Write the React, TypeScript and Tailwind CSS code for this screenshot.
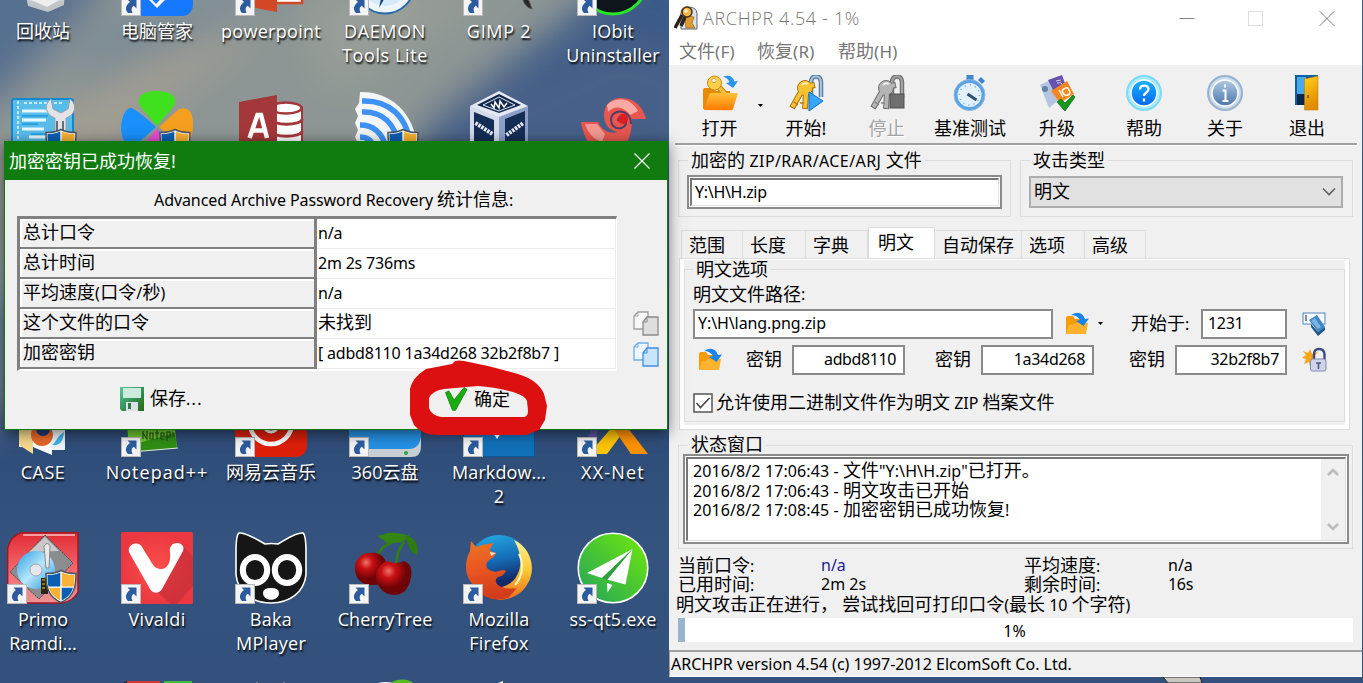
import React from "react";

/* ---------- text ---------- */

// Chinese runs are set a little larger than the Latin text around them.
function Mixed({ text }: { text: string }) {
  const parts = text.split(/([\u3000-\u9fff\uff00-\uffef]+)/).filter(Boolean);
  return (
    <>
      {parts.map((p, i) =>
        /[\u3000-\u9fff\uff00-\uffef]/.test(p) ? (
          <span key={i} className="text-[18px] leading-none tracking-normal">{p}</span>
        ) : (
          <span key={i}>{p}</span>
        )
      )}
    </>
  );
}

/* ---------- shared pieces ---------- */

function Shortcut() {
  return (
    <svg className="absolute bottom-0 left-0 h-5 w-5" viewBox="0 0 20 20">
      <rect x="0.5" y="0.5" width="19" height="19" fill="#f4f4f4" stroke="#b9b9b9" />
      <path d="M6.500 3.500H15.500V12.500L12.800 9.800C10.500 11 10 13.500 11.500 17H7C3.800 14 4.300 9.500 9 6z" fill="#2c5c9f" />
    </svg>
  );
}

function Shield({ className }: { className: string }) {
  return (
    <svg className={className} viewBox="0 0 32 34">
      <path d="M16 1C11 4 6 4 1 4c0 14 2 23 15 29C29 27 31 18 31 4 26 4 21 4 16 1z" fill="#fff" stroke="#4b5560" strokeWidth="1.500" />
      <path d="M15.300 3C11 5 7 5.500 2.500 5.500c0 4 0 8 1 11.500h11.800z" fill="#0a5fb4" />
      <path d="M16.700 3C21 5 25 5.500 29.500 5.500c0 4 0 8-1 11.500H16.700z" fill="#f9b233" />
      <path d="M4 18.300h11.300V31C9 28 5.500 24 4 18.300z" fill="#f9b233" />
      <path d="M28 18.300H16.700V31C23 28 26.500 24 28 18.300z" fill="#0a5fb4" />
    </svg>
  );
}

const box = "h-[72px] w-[72px]";

/* ---------- desktop icons ---------- */

const RecycleBin = () => (
  <svg className={box} viewBox="0 0 72 72">
    <path d="M10 20l45-8 5 8-3 40-16 7-20-7z" fill="#d3d5d8" />
    <path d="M20 56l18 4 19-4v5l-16 7-20-6z" fill="#c2c5c9" /><path d="M24 56l12-2 16 2-12 7z" fill="#eeeeef" />
  </svg>
);
const PcManager = () => (
  <svg className={box} viewBox="0 0 72 72">
    <rect width="72" height="72" rx="11" fill="#1677ff" />
    <path d="M22 50l14 14 14-14V30H22z" fill="#fff" /><path d="M30 52l5 5 13-14" fill="none" stroke="#1677ff" strokeWidth="4" />
  </svg>
);
const PowerPoint = () => (
  <svg className={box} viewBox="0 0 72 72">
    <rect x="36" y="6" width="31" height="53" fill="#fff" stroke="#d24726" strokeWidth="2.500" />
    <rect x="44" y="50" width="17" height="3" fill="#d24726" />
    <path d="M4 7L42 0v68L4 61z" fill="#d24726" />
  </svg>
);
const Daemon = () => (
  <svg className={box} viewBox="0 0 72 72">
    <circle cx="36" cy="40" r="29.500" fill="#eef6fc" stroke="#2869b0" strokeWidth="2" />
    <circle cx="36" cy="38" r="24" fill="#d3eaf9" /><path d="M30 64l4-18 4 4z" fill="#17387c" />
  </svg>
);
const Gimp = () => (
  <svg className={box} viewBox="0 0 72 72">
    <path d="M60 46q2 7 6 11l3 8q-7-2-9-9z" fill="#272727" stroke="#555" />
  </svg>
);
const IObit = () => (
  <svg className={box} viewBox="0 0 72 72">
    <circle cx="36" cy="36" r="34" fill="#0e161c" stroke="#27e52a" strokeWidth="3" />
  </svg>
);
const Toolbox = () => (
  <svg className={box} viewBox="0 0 72 72">
    <rect x="5" y="8" width="61" height="60" rx="2" fill="#59bdec" stroke="#1488cd" strokeWidth="2" />
    <path d="M11 10v50M17 12h40" stroke="#c6ecfb" strokeWidth="2" strokeDasharray="3 2" />
    <path d="M15 20h26M15 29h24M15 38h22M22 46h18" stroke="#e6f9ff" strokeWidth="3" />
    <path d="M15 25h26M15 33h16M24 43h14" stroke="#2ca3df" strokeWidth="2" />
    <path d="M44 8c-8 6-5 16 4 19v30h11V27c9-3 12-13 4-19l-2 10-7 4-8-4z" fill="#e3e4e7" stroke="#9aa0a8" />
    <path d="M50 30v30M56 30v30" stroke="#666f78" strokeWidth="2" />
  </svg>
);
const Pinwheel = () => (
  <svg className={box} viewBox="0 0 72 72">
    <path d="M36 35L19 15C14 4 25 0 36 0s22 4 17 15z" fill="#3fe01e" />
    <path d="M35 36L15 54C-6 60-2 17 10 17q4 0 25 19z" fill="#1990fb" />
    <path d="M38 36l20-18c10-3 14 4 14 15 0 16-5 22-14 19z" fill="#f4a01e" />
    <path d="M36 38l17 19c4 11-5 15-17 15S15 68 20 57z" fill="#ea4bd4" />
  </svg>
);
const Access = () => (
  <svg className={box} viewBox="0 0 72 72">
    <path d="M36 17v50c0 5 31 5 31 0V17z" fill="#fff" stroke="#a4373a" strokeWidth="2" />
    <ellipse cx="51" cy="17" rx="15.500" ry="5.500" fill="#fff" stroke="#a4373a" strokeWidth="2.500" />
    <path d="M36 28c0 7 31 7 31 0M36 40c0 7 31 7 31 0M36 53c0 7 31 7 31 0" fill="none" stroke="#a4373a" strokeWidth="3" />
    <path d="M4 11l38-7v64L4 61z" fill="#a4373a" />
    <path d="M14.500 47l8-23h3.500l6 23M18 39.500h11.500" fill="none" stroke="#fff" strokeWidth="4.500" />
  </svg>
);
const Wifi = () => (
  <svg className={box} viewBox="0 0 72 72">
    <path d="M11 1C38 0 66 18 69 60H6l3-8-3-6 3-7-3-7 3-7-3-7 4-6z" fill="#f3f5f7" />
    <g fill="none" stroke="#3e92f6" strokeWidth="5.500">
      <path d="M13 10c26-1 45 14 49 46" /><path d="M13 21c20-1 33 11 37 34" />
      <path d="M11 34c14 0 22 8 26 22" /><path d="M11 46c8 0 12 4 14 10" />
    </g>
  </svg>
);
const VBox = () => (
  <svg className={box} viewBox="0 0 72 72">
    <path d="M7 15L36 0l29 15v42L36 72 7 57z" fill="#e4e8f3" />
    <path d="M7 15l29 11v46L7 57z" fill="#d3daea" /><path d="M65 15L36 26v46l29-15z" fill="#8e9fc9" />
    <path d="M14 14L36 3l22 11-22 8z" fill="#12294e" />
    <path d="M20 14l16-8 16 8-16 6z" fill="none" stroke="#dfe7f5" />
    <path d="M28 13l3 4 1-6 4 6 1-7 4 6 3-4" fill="none" stroke="#fff" strokeWidth="1.500" />
    <path d="M11 21l20 8v33L11 53z" fill="#152e55" /><path d="M62 20L42 28v34l20-10z" fill="#152e55" />
    <path d="M12.500 32l17 11M43.500 44l17-12" stroke="#e6ecf7" strokeWidth="4" strokeDasharray="2.500 1" />
  </svg>
);
const RedShell = () => (
  <svg className={box} viewBox="0 0 72 72">
    <path d="M4 31h17c4 9 12 12 20 10-8-1-14-7-14-17C27 13 35 7 44 7c14 0 22 9 25 21H55c0 17-6 36-26 36C14 60 7 48 4 31z" fill="#e8564f" />
    <path d="M30 14c8-9 24-8 31 6l-8 4c-6-9-16-10-22-3z" fill="#f9aaa4" />
    <path d="M54 33c0-16-20-16-20-4 0 11 16 11 15 1-1-5-8-5-8 0" fill="none" stroke="#4a3f66" strokeWidth="2" />
    <path d="M8 33h12l8 10-3 8C16 48 11 42 8 33z" fill="#f39892" />
    <circle cx="46" cy="28" r="5" fill="#d91f25" />
  </svg>
);
const CaseFolder = () => (
  <svg className={box} viewBox="0 0 72 72">
    <path d="M12 20h30v42H12z" fill="#f3f3f3" /><path d="M12 20l14 8v41l-14-9z" fill="#f5d98c" />
    <path d="M26 40l19 4v26l-19-8z" fill="#fff" /><path d="M42 40h16v25H44z" fill="#eef4f8" />
    <circle cx="35" cy="50" r="11" fill="#e8672a" /><circle cx="36" cy="44" r="7" fill="#1d3974" />
    <path d="M45 60c4-2 4-8 12-13-1 10-4 14-12 13z" fill="#3eb5e8" />
  </svg>
);
const Notepadpp = () => (
  <svg className={box} viewBox="0 0 72 72">
    <path d="M4 8l46-3 6 58-48 4z" fill="#6cc82c" /><path d="M18 58l36-10 2 15-36 3z" fill="#2f8f15" />
    <path d="M22 46v8M22 48l4 6v-8M29 48h3v6h-3zM36 45v9M34 48h4M40 54h3M40 51h3v-3h-3v6M46 56v-9h3v5h-3M52 52v-5" fill="none" stroke="#26531b" strokeWidth="1.200" />
    <path d="M4 67.500l53-4.500" stroke="#dfe8dd" strokeWidth="1.200" />
  </svg>
);
const NetEase = () => (
  <svg className={box} viewBox="0 0 72 72">
    <rect width="72" height="72" rx="11" fill="#dd1f0a" />
    <circle cx="36" cy="38" r="21" fill="none" stroke="#fff" strokeWidth="4.500" />
    <circle cx="36" cy="40" r="7" fill="none" stroke="#fff" strokeWidth="3" />
  </svg>
);
const Cloud360 = () => (
  <svg className={box} viewBox="0 0 72 72">
    <path d="M0 20h72v42q0 10-10 10H0z" fill="#c9ced3" /><path d="M0 20h72v32q-2 12-12 12H0z" fill="#2590e3" />
    <circle cx="57" cy="68" r="2" fill="#35a63c" />
  </svg>
);
const Markdown = () => (
  <svg className={box} viewBox="0 0 72 72">
    <rect x="0.500" y="0.500" width="71" height="71" fill="#1170b8" stroke="#0b5896" />
    <path d="M30 48h8l-4 6z" fill="#fff" />
  </svg>
);
const XXNet = () => (
  <svg className={box} viewBox="0 0 72 72">
    <path d="M20 70L0 70 20 36z" fill="#5a4e9c" /><path d="M42 34H56L30 69H12z" fill="#fdc500" />
    <path d="M30 34h14l27 35H54z" fill="#ff9200" />
  </svg>
);
const Primo = () => (
  <svg className={box} viewBox="0 0 72 72">
    <defs>
      <linearGradient id="pr" x1="0" y1="0" x2="0" y2="1"><stop offset="0" stopColor="#e02a34" /><stop offset="0.500" stopColor="#f3656b" /><stop offset="1" stopColor="#ee9396" /></linearGradient>
      <linearGradient id="cd" x1="0" y1="0" x2="1" y2="1"><stop offset="0" stopColor="#2a9fe4" /><stop offset="0.500" stopColor="#b8e6fb" /><stop offset="1" stopColor="#1f93dc" /></linearGradient>
    </defs>
    <path d="M14 .7h57V60q-6 10-16 11H.7V16Q4 4 14 .7z" fill="url(#pr)" stroke="#a51720" strokeWidth="1.400" />
    <path d="M16 3h52" stroke="#f7a0a4" strokeWidth="2" />
    <path d="M38 3l28 28-34 36L3 40z" fill="#8b8c8f" stroke="#4c4c4e" strokeDasharray="2 1" />
    <path d="M38 5l14 14-30 1z" fill="#c9c9cb" />
    <circle cx="29" cy="38" r="19" fill="url(#cd)" /><circle cx="29" cy="38" r="6" fill="#e6e8ed" stroke="#9fa7b5" />
    <path d="M37 14q4-5 6 0l-1 22h-3z" fill="#e9e9eb" stroke="#727377" strokeWidth=".8" />
    <path d="M34 46h7v16h-7z" fill="#2b2717" /><path d="M35 48h3M35 52h3M35 56h3" stroke="#e7cf2b" />
  </svg>
);
const Vivaldi = () => (
  <svg className={box} viewBox="0 0 72 72">
    <defs><radialGradient id="vi"><stop offset="0" stopColor="#fb4f4c" /><stop offset="1" stopColor="#ea3840" /></radialGradient></defs>
    <rect width="72" height="72" rx="1.500" fill="url(#vi)" />
    <path d="M61 13l11 12v29l-16 18H50L36 60z" fill="#b82a33" opacity=".5" />
    <path d="M15 11.500c-5 0-9 5-6.500 9.500l20.500 36c3 5 9 5 12 0l21-38c2-5-2-8-6-8-5 0-8 4-7 9 1 10-2 16-8 17-6 0-8-2-12-9L21 15c-1-2-3-3.500-6-3.500z" fill="#fff" />
  </svg>
);
const Baka = () => (
  <svg className={box} viewBox="0 0 72 72">
    <path d="M4 1q6-1 26 11 6-1 13 0Q62 0 68 1q3 2 3 20v22c-2 17-16 28-35 28S3 60 1 43V20Q1 3 4 1z" fill="#161616" stroke="#fff" strokeWidth="1.600" />
    <ellipse cx="20" cy="38" rx="12.200" ry="13" fill="#161616" stroke="#fff" strokeWidth="6" />
    <ellipse cx="52" cy="38" rx="12.200" ry="13" fill="#161616" stroke="#fff" strokeWidth="6" />
    <path d="M28 61q0-5 8-5t8 5c0 9-16 9-16 0z" fill="#fff" />
  </svg>
);
const Cherry = () => (
  <svg className={box} viewBox="0 0 72 72">
    <defs><radialGradient id="ch" cx=".35" cy=".3"><stop offset="0" stopColor="#f0736d" /><stop offset=".4" stopColor="#ca1013" /><stop offset="1" stopColor="#6f0406" /></radialGradient></defs>
    <path d="M27 27c3-9 7-14 22-19M47 35c0-12 3-18 8-25" fill="none" stroke="#34800f" strokeWidth="2.500" />
    <path d="M28 4c8-1 8-4 18-3 6 0 9 2 14 2-5 9-9 7-15 8 1-3-8 3-10-3-2 0-4-3-7-4z" fill="#358512" /><path d="M57 3c9 3 14 11 11 20-4-1-7-5-8-9-2-3-3-7-3-11z" fill="#2f7b10" />
    <path d="M22 21c8-1 14 4 15 10 3 13-3 23-14 22C10 53 6 44 6 36s6-16 16-15z" fill="url(#ch)" />
    <path d="M38 29q10 4 17 0c8 3 8 10 7 16-2 13-9 18-17 18-10 0-18-9-18-19 0-7 4-12 11-15z" fill="url(#ch)" />
  </svg>
);
const Firefox = () => (
  <svg className={box} viewBox="0 0 72 72">
    <defs>
      <linearGradient id="fb" x1=".4" y1="0" x2=".6" y2="1"><stop offset="0" stopColor="#23a4e0" /><stop offset=".4" stopColor="#156cb6" /><stop offset=".75" stopColor="#142a68" /></linearGradient>
      <linearGradient id="fo" x1="0" y1="0" x2="0.200" y2="1"><stop offset="0" stopColor="#ec7723" /><stop offset=".5" stopColor="#ea5622" /><stop offset="1" stopColor="#d23d1c" /></linearGradient>
      <linearGradient id="fy" x1="0" y1="0" x2="0" y2="1"><stop offset="0" stopColor="#fff19b" /><stop offset=".5" stopColor="#fbc933" /><stop offset="1" stopColor="#ee6b20" /></linearGradient>
    </defs>
    <circle cx="36" cy="34" r="31" fill="url(#fb)" />
    <path d="M51 8c18 8 22 30 14 43-6 12-18 17-30 17l-5-12c23 1 36-22 21-48z" fill="url(#fy)" />
    <path d="M56 22c5 10 4 22-4 31" fill="none" stroke="#fff6c0" strokeWidth="2" />
    <path d="M7 19l1-10 5 6q8-3 18-4-4 4-4 8l6 2q-1 4-7 7-5 4-1 9 5 4 11 2 4-2 7 0-2 5-8 6-4 3-1 7 6 6 20 4l-9 10q-21 6-34-12C0 43 2 28 7 19z" fill="url(#fo)" />
    <path d="M27 20l6 1-5 3z" fill="#fbe3cf" />
  </svg>
);
const SsQt = () => (
  <svg className={box} viewBox="0 0 72 72">
    <defs><linearGradient id="ss" x1="0" y1="1" x2="1" y2="0"><stop offset="0" stopColor="#21a25e" /><stop offset="1" stopColor="#71ea08" /></linearGradient></defs>
    <circle cx="36" cy="36" r="34.800" fill="url(#ss)" stroke="#fff" strokeWidth="1.600" />
    <path d="M55.500 17L10 41l15 5zM55.500 17L30 47.500l18.500 5zM30 51l5.500 2-5 7.500z" fill="#fff" />
    <path d="M55.500 17L25 46l5 2z" fill="#2f9e3e" />
  </svg>
);
const BottomCube = () => (
  <svg className={box} viewBox="0 0 72 72">
    <path d="M6 2h33v30H2z" fill="#cf3a35" /><path d="M43 2h28v30H43z" fill="#40b93c" /><path d="M2 4l4-2v20H2z" fill="#222" />
  </svg>
);
const BottomLeaf = () => (
  <svg className={box} viewBox="0 0 72 72">
    <path d="M26 5q10-4 22 0v10H26z" fill="#f2f2f2" /><path d="M42 4c7-5 18-4 22 0l-6 12z" fill="#56be1c" />
  </svg>
);
const BottomTips = () => (
  <svg className={box} viewBox="0 0 72 72"><path d="M20 6l2-3 2 3zM47 6l2-3 2 3z" fill="#e8e8e8" /></svg>
);
const BottomPage = () => (
  <svg className={box} viewBox="0 0 72 72"><path d="M30 6l10-4v4z" fill="#f4f4f4" /></svg>
);

type DeskItem = { icon: React.ReactNode; label?: string[]; link?: boolean; shield?: boolean; track?: string } | null;

const desk: DeskItem[] = [
  { icon: <RecycleBin />, label: ["回收站"] },
  { icon: <PcManager />, label: ["电脑管家"], link: true },
  { icon: <PowerPoint />, label: ["powerpoint"], link: true, track: "tracking-[0.300px]" },
  { icon: <Daemon />, label: ["DAEMON", "Tools Lite"], link: true, track: "tracking-[0.600px]" },
  { icon: <Gimp />, label: ["GIMP 2"], link: true, track: "tracking-[0.700px]" },
  { icon: <IObit />, label: ["IObit", "Uninstaller"], link: true, track: "tracking-[0.200px]" },
  { icon: <Toolbox />, shield: true },
  { icon: <Pinwheel />, shield: true },
  { icon: <Access /> },
  { icon: <Wifi />, shield: true },
  { icon: <VBox /> },
  { icon: <RedShell /> },
  null, null, null, null, null, null,
  { icon: <CaseFolder />, label: ["CASE"], track: "tracking-[0.500px]" },
  { icon: <Notepadpp />, label: ["Notepad++"], link: true, track: "tracking-[1px]" },
  { icon: <NetEase />, label: ["网易云音乐"], link: true },
  { icon: <Cloud360 />, label: ["360云盘"], link: true },
  { icon: <Markdown />, label: ["Markdow...", "2"], link: true, track: "tracking-[0.100px]" },
  { icon: <XXNet />, label: ["XX-Net"], link: true, track: "tracking-[1.200px]" },
  { icon: <Primo />, label: ["Primo", "Ramdi..."], link: true, shield: true },
  { icon: <Vivaldi />, label: ["Vivaldi"], link: true, track: "tracking-[0.400px]" },
  { icon: <Baka />, label: ["Baka", "MPlayer"], link: true, track: "tracking-[0.300px]" },
  { icon: <Cherry />, label: ["CherryTree"], link: true, track: "tracking-[0.100px]" },
  { icon: <Firefox />, label: ["Mozilla", "Firefox"], link: true, track: "tracking-[0.300px]" },
  { icon: <SsQt />, label: ["ss-qt5.exe"], link: true, track: "tracking-[0.200px]" },
  null,
  { icon: <BottomCube /> },
  { icon: <BottomTips /> },
  { icon: <BottomLeaf /> },
  { icon: <BottomPage /> },
  null,
];

function Desktop() {
  return (
    <div className="-mt-[56px] -ml-[14px] grid w-[684px] auto-rows-[147px] grid-cols-[repeat(6,114px)]">
      {desk.map((d, i) => (
        <div key={i} className="flex flex-col items-center">
          {d && (
            <>
              <div className="relative h-[72px] w-[72px]">
                {d.icon}
                {d.link && <Shortcut />}
                {d.shield && <Shield className="absolute right-0.5 bottom-0 h-[35px] w-8" />}
              </div>
              <div className={`mt-[3px] font-['Open_Sans','Noto_Sans_CJK_SC',sans-serif] text-[18px] leading-6 whitespace-nowrap text-white [text-shadow:1px_2px_2px_#000] ${d.track ?? ""}`}>
                {d.label?.map((l) => (
                  <div key={l} className="text-center">{l}</div>
                ))}
              </div>
            </>
          )}
        </div>
      ))}
    </div>
  );
}

function Wallpaper() {
  return (
    <svg className="absolute inset-0 h-full w-full" viewBox="0 0 1363 683" preserveAspectRatio="none">
      <defs>
        <filter id="soft" x="-30%" y="-30%" width="160%" height="160%"><feGaussianBlur stdDeviation="18" /></filter>
        <linearGradient id="sky" gradientUnits="userSpaceOnUse" x1="0" y1="0" x2="0" y2="683">
          <stop offset="0" stopColor="#3c5b88" /><stop offset=".62" stopColor="#2e4c78" /><stop offset=".8" stopColor="#34537f" /><stop offset="1" stopColor="#33517c" />
        </linearGradient>
      </defs>
      <rect width="1363" height="683" fill="url(#sky)" />
      <g filter="url(#soft)">
        <path d="M-60-60H650L580 10 430 120 360 300H-60z" fill="#8d9694" />
        <path d="M-60-60H140L70 30-10 110-60 130z" fill="#56708f" />
        <path d="M-20 180L60 110 190 50 260 30 150 110 70 200z" fill="#a29d92" />
        <path d="M100 20L220-10 330-20 200 30 60 90z" fill="#7c8b96" />
        <path d="M300 0L400-20 480 0 330 90z" fill="#989e97" />
        <path d="M-40 260H10V410L-40 440z" fill="#8996a3" />
        <path d="M430 120L620 30 700 60 700 160 480 200z" fill="#466189" />
      </g>
    </svg>
  );
}

/* ---------- toolbar and small icons ---------- */

const OpenKey = () => (
  <svg className="h-9 w-9" viewBox="0 0 36 36">
    <defs><linearGradient id="fol" x1="0" y1="0" x2="0" y2="1"><stop offset="0" stopColor="#ffc23c" /><stop offset="1" stopColor="#ff7a00" /></linearGradient></defs>
    <path d="M1 34V15q0-2 2-2h8l3 3h14v18z" fill="#e98b06" />
    <path d="M15 10l9 10" stroke="#c68a12" strokeWidth="6" /><path d="M15 10l9 10" stroke="#f3bd35" strokeWidth="4" />
    <circle cx="12.500" cy="8" r="7" fill="#fcd04a" stroke="#c68a12" /><circle cx="12" cy="5.500" r="2.200" fill="#fff" stroke="#c68a12" strokeWidth=".7" />
    <path d="M2 35l5-15q.5-2 2-2h26q1 0 .6 1.500L31 34q-.4 1.200-2 1.200z" fill="url(#fol)" />
    <path d="M21 1.500q9-3 11.500 5L36 6l-5 7-7-5 3.500-.8Q26 3 21 1.500z" fill="#2a95ef" />
  </svg>
);
const Keys = ({ gray, children }: { gray?: boolean; children: React.ReactNode }) => (
  <svg className="h-9 w-9" viewBox="0 0 36 36">
    <path d="M23 22V8q0-6.500 5-6.500T33 8v14" fill="none" stroke={gray ? "#6f6f6f" : "#54789f"} strokeWidth="4.500" />
    <path d="M23 22V8q0-6.500 5-6.500T33 8v14" fill="none" stroke={gray ? "#a3a3a3" : "#a7c2dd"} strokeWidth="2.200" />
    <g fill="none" stroke={gray ? "#6c6c6c" : "#a8730d"} strokeWidth="6"><path d="M13 17L4 33M18 18l-1 16M18 12l9-2" /></g>
    <circle cx="17" cy="13" r="7.500" fill={gray ? "#b5b5b5" : "#f8c235"} stroke={gray ? "#6c6c6c" : "#a8730d"} />
    <g fill="none" stroke={gray ? "#b5b5b5" : "#f8c235"} strokeWidth="4"><path d="M13 17L4.500 32M18 18l-1 15M18 12l8-2" /></g>
    <path d="M14 10q3-3 6-1" stroke={gray ? "#eee" : "#fff3bd"} strokeWidth="2" fill="none" />
    <path d="M6 27l4 3M12 28h4" stroke={gray ? "#858585" : "#b87c0c"} strokeWidth="1.500" />
    {children}
  </svg>
);
const Stopwatch = () => (
  <svg className="h-9 w-9" viewBox="0 0 36 36">
    <rect x="14.500" y="0" width="7" height="5" fill="#3d86cc" /><path d="M26 5l3-3 4 4-3 3z" fill="#3d86cc" />
    <circle cx="17.500" cy="20" r="15.500" fill="#5aa3e4" stroke="#8fb9dc" /><circle cx="17.500" cy="20" r="12" fill="#e2f0fa" />
    <circle cx="17.500" cy="20" r="10" fill="none" stroke="#7ba3c8" strokeWidth="1.500" strokeDasharray="1 4.236" />
    <path d="M15.500 19l9 6" stroke="#32506f" strokeWidth="3" />
  </svg>
);
const Upgrade = () => (
  <svg className="h-9 w-9" viewBox="0 0 36 36">
    <path d="M1 10L20 1l7 18-17 14z" fill="#b4c6df" /><path d="M9 5L23 0l4 11-12 6z" fill="#6752ae" />
    <circle cx="6" cy="14" r="3" fill="#63819f" /><path d="M12 16L28 6l7 13-14 9z" fill="#f6861f" />
    <path d="M20 15l4 7M25 14q3-3 5 1t-1 5-5-2 1-4z" fill="none" stroke="#fff" strokeWidth="1.500" />
    <path d="M17 6l5-1M18 8q4-1 5 1" stroke="#d8d0ef" fill="none" />
    <path d="M18 27l4-3 4 4 8-8 2 2-10 14z" fill="#18981b" stroke="#0c6f12" strokeWidth=".8" />
  </svg>
);
const Round = ({ info }: { info?: boolean }) => (
  <svg className="h-9 w-9" viewBox="0 0 36 36">
    <defs>
      <linearGradient id="rb" x1="0" y1="0" x2="0" y2="1"><stop offset="0" stopColor="#16b3ff" /><stop offset="1" stopColor="#0666ef" /></linearGradient>
      <linearGradient id="ri" x1="0" y1="0" x2="0" y2="1"><stop offset="0" stopColor="#aecbe2" /><stop offset="1" stopColor="#4c74ab" /></linearGradient>
    </defs>
    <circle cx="18" cy="18" r="17" fill={info ? "#c9dcea" : "#a8eafa"} stroke={info ? "#9ab1cd" : "#7adcf7"} strokeWidth="2" />
    <circle cx="18" cy="18" r="13" fill={info ? "url(#ri)" : "url(#rb)"} stroke="#fff" strokeWidth="1.500" />
    {info ? (
      <path d="M15.500 15.500H18.500V26M15.500 26h6M18 9.500v3" fill="none" stroke="#fff" strokeWidth="2" />
    ) : (
      <path d="M14 14.500c0-5 8.500-5 8.500-.5 0 3.500-4.500 3.500-4.500 7M18 23.500v3" fill="none" stroke="#fff" strokeWidth="2.300" />
    )}
  </svg>
);
const Door = () => (
  <svg className="h-9 w-9" viewBox="0 0 36 36">
    <defs><linearGradient id="dr" x1="0" y1="0" x2="0.300" y2="1"><stop offset="0" stopColor="#ffd21c" /><stop offset="1" stopColor="#e08a00" /></linearGradient></defs>
    <path d="M6 0h23v30H6z" fill="#0f5fa8" /><path d="M8 2h9v17H8z" fill="#4aa9ea" /><path d="M8 19h9v11H8z" fill="#08264b" />
    <path d="M15.500 4L29 1v34H15.500z" fill="url(#dr)" stroke="#b57606" strokeWidth=".5" /><path d="M19 20v3" stroke="#6a4300" strokeWidth="1.500" />
  </svg>
);
const FolderArrow = () => (
  <svg className="h-6 w-6" viewBox="0 0 24 24">
    <path d="M1 22V6q0-2 2-2h5l2 3h10v15z" fill="#f79b0b" /><path d="M1 22l3-9q4 0 7-2h12l-2 11z" fill="#ffb32c" />
    <path d="M6 3Q16-3 20 7l4-.5L18.500 14 11 9l4-1Q12 3 6 3z" fill="#1684ea" />
  </svg>
);
const PenIcon = () => (
  <svg className="h-[25px] w-[25px]" viewBox="0 0 25 25">
    <rect x="1" y="2" width="22" height="11" fill="#f6fafd" stroke="#4f86bd" /><path d="M4 4v6" stroke="#456" strokeWidth="1.300" />
    <path d="M7 9l8-5 8 12-7 5z" fill="#3d86c6" /><path d="M9 10l4-3 6 9-3 2z" fill="#79b4e0" /><path d="M16 21l7-5v3l-7 6-7-9v-3z" fill="#1e5587" />
  </svg>
);
const LockIcon = () => (
  <svg className="h-[25px] w-[25px]" viewBox="0 0 25 25">
    <path d="M8 2l2 5 6-2-4 5 3 5-5-1-2 6-1-5-5 2 2-5-4-1 4-3-3-4 5 2z" fill="#f8a51b" />
    <path d="M12 13V7q0-5 5-5t5.500 5v7" fill="none" stroke="#3c4b7d" strokeWidth="2.400" />
    <rect x="8.500" y="12" width="15.500" height="12" rx="2" fill="#cfd5e6" stroke="#7f8bb0" /><path d="M14 16h5M16.500 16v6" stroke="#4d5a86" strokeWidth="1.600" />
  </svg>
);
const CopyIcon = ({ blue }: { blue?: boolean }) => (
  <svg className="h-[25px] w-[26px]" viewBox="0 0 26 25">
    <path d="M1 5l4-4h10v17H1z" fill={blue ? "#eef7ff" : "#f8f8f8"} stroke={blue ? "#6caeea" : "#a0a0a0"} strokeWidth="1.300" />
    <path d="M10 11l4-5h11v18H10z" fill={blue ? "#c9e5fc" : "#dedede"} stroke={blue ? "#3f8de0" : "#8b8b8b"} strokeWidth="1.300" />
    <path d="M10 11h4V6" fill="none" stroke={blue ? "#3f8de0" : "#8b8b8b"} /><path d="M1 5h4V1" fill="none" stroke={blue ? "#6caeea" : "#a0a0a0"} />
  </svg>
);
const SaveIcon = () => (
  <svg className="h-6 w-6" viewBox="0 0 24 24">
    <defs><linearGradient id="sv" x1="0" y1="0" x2="1" y2="1"><stop offset="0" stopColor="#58c89e" /><stop offset=".6" stopColor="#2f8a4c" /><stop offset="1" stopColor="#2c6a10" /></linearGradient></defs>
    <path d="M0 0h24v24H2l-2-2z" fill="url(#sv)" /><path d="M3 1h18v10H3z" fill="#cdeadd" /><path d="M6 15h12v9H6z" fill="#dcdfe9" /><path d="M8 16h3v6H8z" fill="#2c7a48" />
  </svg>
);
const CheckIcon = () => (
  <svg className="h-6 w-[23px]" viewBox="0 0 23 24">
    <path d="M.5 5.500L4 4l5 9L19 .5l3 1.800-11.500 21H7.500z" fill="#1aad10" stroke="#0d7d0a" strokeWidth=".8" />
  </svg>
);
const Caret = () => <svg className="h-[3px] w-[5px]" viewBox="0 0 5 3"><path d="M0 0h5L2.500 3z" fill="#000" /></svg>;

/* ---------- main window ---------- */

const latin = "font-['Noto_Sans','Noto_Sans_CJK_SC',sans-serif]";

function Tool({ icon, label, className, disabled }: { icon: React.ReactNode; label: string; className: string; disabled?: boolean }) {
  return (
    <div className={`flex flex-col items-center ${className}`}>
      {icon}
      <div className={`mt-[7px] text-[18px] leading-5 ${disabled ? "text-[#a3a3a3] [text-shadow:1px_1px_0_#fff]" : ""}`}>{label}</div>
    </div>
  );
}

const tabs: [string, string][] = [
  ["范围", "w-[62px]"], ["长度", "w-[63px]"], ["字典", "w-[62px]"], ["明文", "w-[67px]"],
  ["自动保存", "w-[87px]"], ["选项", "w-[63px]"], ["高级", "w-[61px]"],
];

function Field({ value, className }: { value: string; className: string }) {
  return <div className={`flex h-[30px] items-center border-2 border-[#8a8a8a] bg-white pb-px leading-5 ${className}`}>{value}</div>;
}

function MainWindow() {
  return (
    <div className={`absolute top-0 left-[669px] flex h-[677px] w-[693px] flex-col bg-[#f0f0f0] text-[16px] leading-5 whitespace-nowrap text-black ${latin}`}>
      <div className="flex h-9 items-center bg-white pl-[5px] text-[#8c8c8c]">
        <svg className="h-6 w-6" viewBox="0 0 24 24">
          <path d="M7 23V7q0-6 7-6 9 0 9 7v15z" fill="#d9e1ea" stroke="#5d6670" />
          <path d="M12 9l8 2-2 6 3 5h-9l-1-6z" fill="#dd9a32" stroke="#8a5a17" strokeWidth=".6" />
          <circle cx="13" cy="6" r="5" fill="#f2b64a" stroke="#4a3013" strokeWidth="1.500" /><circle cx="12" cy="5" r="1.800" fill="#fff0c6" />
          <path d="M8 9L1 22M11 11L7 20" stroke="#2b231b" strokeWidth="3.500" />
        </svg>
        <div className="ml-[5px] font-['Open_Sans',sans-serif] text-[18px] font-light tracking-[0.650px] text-[#777]">ARCHPR 4.54 - 1%</div>
        <svg className="ml-auto h-4 w-[156px]" viewBox="0 0 156 16">
          <path d="M.5 8.500h15" stroke="#858585" /><rect x="69.500" y="1.500" width="14" height="14" fill="none" stroke="#dedede" />
          <path d="M140.500 1l15 15M155.500 1l-15 15" stroke="#808080" />
        </svg>
        <div className="w-[27px]" />
      </div>
      <div className="flex h-[29px] items-center bg-white pt-[3px] pl-[10px] text-[17px] tracking-[0.300px] text-[#767676]">
        <div className="w-[78px]"><Mixed text="文件(F)" /></div>
        <div className="w-[81px]"><Mixed text="恢复(R)" /></div>
        <div><Mixed text="帮助(H)" /></div>
      </div>

      <div className="flex h-[78px] pt-[10px] pl-[13px]">
        <Tool className="w-[75px]" icon={<OpenKey />} label="打开" />
        <div className="w-[6px] pt-[29px] pl-px"><Caret /></div>
        <Tool className="w-[86px]" label="开始!" icon={<Keys><path d="M21 17l14 9-14 10z" fill="#37a6f5" stroke="#0b6fd2" /></Keys>} />
        <Tool className="w-[75px]" disabled label="停止" icon={<Keys gray><rect x="21" y="19" width="14" height="14" fill="#6f6f6f" stroke="#4f4f4f" /></Keys>} />
        <Tool className="w-[92px]" icon={<Stopwatch />} label="基准测试" />
        <Tool className="w-[82px]" icon={<Upgrade />} label="升级" />
        <Tool className="w-[92px]" icon={<Round />} label="帮助" />
        <Tool className="w-[70px]" icon={<Round info />} label="关于" />
        <Tool className="w-[94px]" icon={<Door />} label="退出" />
      </div>
      <div className="mr-[5px] ml-[6px] h-[3px] border-t-2 border-b border-t-[#a0a0a0] border-b-white" />

      <div className="mt-[5px] flex gap-[9px] pl-[9px]">
        <fieldset className="h-[66px] w-[333px] border border-[#dcdcdc] pl-2">
          <legend className="ml-px px-[3px] tracking-[0.400px]"><Mixed text="加密的 ZIP/RAR/ACE/ARJ 文件" /></legend>
          <div className="mt-[4px] h-[34px] w-[315px] border-2 border-[#8b8b8b] bg-white p-px">
            <div className="flex h-full items-center border-t-2 border-r border-b border-l-2 border-t-[#777] border-r-[#e3e3e3] border-b-[#e3e3e3] border-l-[#777] pl-[3px] tracking-[-0.300px]">Y:\H\H.zip</div>
          </div>
        </fieldset>
        <fieldset className="h-[66px] w-[333px] border border-[#dcdcdc] pl-2">
          <legend className="ml-px px-[3px]"><Mixed text="攻击类型" /></legend>
          <div className="mt-[5px] flex h-[32px] w-[314px] items-center justify-between border-2 border-[#adadad] bg-[#e1e1e1] pr-[5px] pl-[3px]">
            <span><Mixed text="明文" /></span>
            <svg className="h-[9px] w-[14px]" viewBox="0 0 14 9"><path d="M1 1.500l6 6 6-6" fill="none" stroke="#606060" strokeWidth="1.600" /></svg>
          </div>
        </fieldset>
      </div>

      <div className="mt-[9px] flex h-8 items-end pl-[12px]">
        {tabs.map(([t, w]) => (
          <div
            key={t}
            className={
              t === "明文"
                ? `h-[31px] border border-b-0 border-[#dcdcdc] bg-white pt-[4px] pl-[9px] text-[18px] ${w}`
                : `h-[28px] border-t border-r border-[#dcdcdc] pt-[4px] pl-[7px] text-[18px] first:border-l ${w}`
            }
          >
            {t}
          </div>
        ))}
      </div>
      <div className="mr-3 ml-[10px] h-[173px] border border-[#dcdcdc] bg-white pt-px pr-1 pb-1 pl-[4px]">
        <div className="h-full bg-[#f0f0f0]">
          <fieldset className="h-[162px] w-[661px] border border-[#dcdcdc] pl-[8px]">
            <legend className="px-[3px]"><Mixed text="明文选项" /></legend>
            <div className="mt-1 flex h-5 items-center"><Mixed text="明文文件路径:" /></div>
            <div className="mt-[5px] flex h-[30px] items-center">
              <Field className="w-[360px] pl-[3px] tracking-[-0.100px]" value="Y:\H\lang.png.zip" />
              <div className="ml-[12px]"><FolderArrow /></div>
              <div className="ml-[9px] flex"><Caret /></div>
              <div className="ml-[28px] w-[70px]"><Mixed text="开始于:" /></div>
              <Field className="w-[86px] pl-[5px] tracking-[-0.300px]" value="1231" />
              <div className="ml-[15px]"><PenIcon /></div>
            </div>
            <div className="mt-[6px] flex h-[30px] items-center">
              <div className="mr-6 ml-[5px]"><FolderArrow /></div>
              <div className="w-[46px]"><Mixed text="密钥" /></div>
              <Field className="w-[113px] justify-end pr-[7px] tracking-[-0.400px]" value="adbd8110" />
              <div className="ml-[30px] w-[46px]"><Mixed text="密钥" /></div>
              <Field className="w-[113px] justify-end pr-[7px] tracking-[-0.300px]" value="1a34d268" />
              <div className="ml-[35px] w-[46px]"><Mixed text="密钥" /></div>
              <Field className="w-[112px] justify-end pr-[6px] tracking-[-0.300px]" value="32b2f8b7" />
              <div className="ml-[15px]"><LockIcon /></div>
            </div>
            <div className="mt-[18px] flex h-5 items-center">
              <svg className="h-5 w-5" viewBox="0 0 20 20">
                <rect x="1" y="1" width="18" height="18" fill="#fff" stroke="#555" strokeWidth="1.500" /><path d="M3.500 10l4 4.500 9-9.500" fill="none" stroke="#444" strokeWidth="1.600" />
              </svg>
              <div className="ml-[3px]"><Mixed text="允许使用二进制文件作为明文 ZIP 档案文件" /></div>
            </div>
          </fieldset>
        </div>
      </div>

      <fieldset className="mt-[5px] ml-[9px] h-[114px] w-[675px] border border-[#dcdcdc] pl-1">
        <legend className="ml-[5px] px-[3px]"><Mixed text="状态窗口" /></legend>
        <div className="-mt-px h-[90px] w-[666px] border-2 border-[#8b8b8b] bg-white p-px">
          <div className="flex h-full border-t-2 border-r border-b border-l-2 border-t-[#777] border-r-[#e3e3e3] border-b-[#e3e3e3] border-l-[#777]">
            <div className="flex-1 pt-[2px] pl-[5px] leading-[19.500px] tracking-[0.100px] [&>div]:h-[19.500px]">
              <div><Mixed text={'2016/8/2 17:06:43 - 文件"Y:\\H\\H.zip"已打开。'} /></div>
              <div><Mixed text="2016/8/2 17:06:43 - 明文攻击已开始" /></div>
              <div><Mixed text="2016/8/2 17:08:45 - 加密密钥已成功恢复!" /></div>
            </div>
            <div className="flex w-6 flex-col items-center justify-between bg-[#f0f0f0] py-[9px]">
              <svg className="h-2 w-3" viewBox="0 0 12 8"><path d="M1 7l5-5 5 5" fill="none" stroke="#bcbcbc" strokeWidth="2.500" /></svg>
              <svg className="h-2 w-3" viewBox="0 0 12 8"><path d="M1 1l5 5 5-5" fill="none" stroke="#bcbcbc" strokeWidth="2.500" /></svg>
            </div>
          </div>
        </div>
      </fieldset>

      <div className="mt-[7px] ml-[9px] grid grid-cols-[143px_203px_144px_auto] auto-rows-[19.500px] leading-[19.500px]">
        <div><Mixed text="当前口令:" /></div><div className="text-[#1c1c96]">n/a</div><div><Mixed text="平均速度:" /></div><div>n/a</div>
        <div><Mixed text="已用时间:" /></div><div>2m 2s</div><div><Mixed text="剩余时间:" /></div><div className="tracking-[-0.300px]">16s</div>
        <div className="col-span-4 -ml-0.5"><Mixed text="明文攻击正在进行， 尝试找回可打印口令(最长 10 个字符)" /></div>
      </div>
      <div className="mt-[4px] ml-[9px] flex h-6 w-[675px] bg-white">
        <div className="w-[7px] bg-[#99b4d1]" />
        <div className="flex-1 pt-[3px] pr-[9px] text-center">1%</div>
      </div>
      <div className="mt-[8px] h-[27px] border-t-2 border-l border-b border-t-[#a0a0a0] border-b-white border-l-[#a0a0a0] pt-[2px] pl-[1px]">
        ARCHPR version 4.54 (c) 1997-2012 ElcomSoft Co. Ltd.
      </div>
    </div>
  );
}

/* ---------- result dialog ---------- */

const stats: [string, string][] = [
  ["总计口令", "n/a"], ["总计时间", "2m 2s 736ms"], ["平均速度(口令/秒)", "n/a"],
  ["这个文件的口令", "未找到"], ["加密密钥", "[ adbd8110 1a34d268 32b2f8b7 ]"],
];

function ResultDialog() {
  return (
    <div className={`absolute top-[141px] left-1 h-[289px] w-[664px] border border-[#107c10] bg-[#f0f0f0] text-[16px] leading-5 whitespace-nowrap text-black shadow-[0_3px_14px_rgba(0,0,0,0.55)] ${latin}`}>
      <div className="flex h-[38px] items-center justify-between bg-[#107c10] pr-[17px] pl-[4px] text-[18px] text-white">
        <span>加密密钥已成功恢复!</span>
        <svg className="h-4 w-4" viewBox="0 0 16 16"><path d="M.5.5l15 15M15.500.5l-15 15" stroke="#fff" strokeWidth="1.200" /></svg>
      </div>
      <div className="mt-[10px] pl-[149px] tracking-[-0.080px]"><Mixed text="Advanced Archive Password Recovery 统计信息:" /></div>
      <div className="mt-[6px] flex pl-3">
        <div className="h-[155px] w-[600px] border-t-[3px] border-r border-b-2 border-l-[3px] border-t-[#808080] border-r-white border-b-white border-l-[#808080] bg-white">
          {stats.map(([k, v]) => (
            <div key={k} className="flex h-[30px]">
              <div className="w-[297px] border-r-[3px] border-b-2 border-[#808080] bg-[#808080]">
                <div className="h-full border-t-2 border-l-2 border-white bg-[#f0f0f0] pt-[2px] pl-px tracking-[0.400px]"><Mixed text={k} /></div>
              </div>
              <div className="flex-1 border-r border-b border-[#ececec] pt-[4px] pl-px tracking-[-0.200px]"><Mixed text={v} /></div>
            </div>
          ))}
        </div>
        <div className="mt-[95px] ml-[16px] flex flex-col gap-[6px]"><CopyIcon /><CopyIcon blue /></div>
      </div>
      <div className="mt-[16px] flex h-6 items-center pl-[115px]">
        <SaveIcon />
        <div className="ml-[6px] w-[295px] tracking-[1.300px]"><Mixed text="保存..." /></div>
        <CheckIcon />
        <div className="ml-[6px] pt-px"><Mixed text="确定" /></div>
      </div>
    </div>
  );
}

export default function App() {
  return (
    <div className="relative h-[683px] w-[1363px] overflow-hidden bg-[#2d4a76]">
      <Wallpaper />
      <div className="relative"><Desktop /></div>
      <svg className="absolute bottom-0 left-[1160px] h-[6px] w-[50px]" viewBox="0 0 50 6"><path d="M3 0h37l2 6H8z" fill="#c9c7c2" stroke="#222" /></svg>
      <MainWindow />
      <ResultDialog />
      <svg className="absolute top-[358px] left-[406px] h-20 w-[144px]" viewBox="0 0 144 80">
        <path fillRule="evenodd" fill="#dc1010" d="M49 3Q53 2 58 3L82 8 112 16Q132 22 138 36L141 48 139 62 133 72 120 77H32Q16 77 8 67L4 57V31Q6 20 20 11L46 6zM72 28L38 31Q26 33 23 40V50Q25 57 35 59H117Q122 59 122 53L121 43Q119 38 110 35Q90 29 72 28z" />
      </svg>
    </div>
  );
}
